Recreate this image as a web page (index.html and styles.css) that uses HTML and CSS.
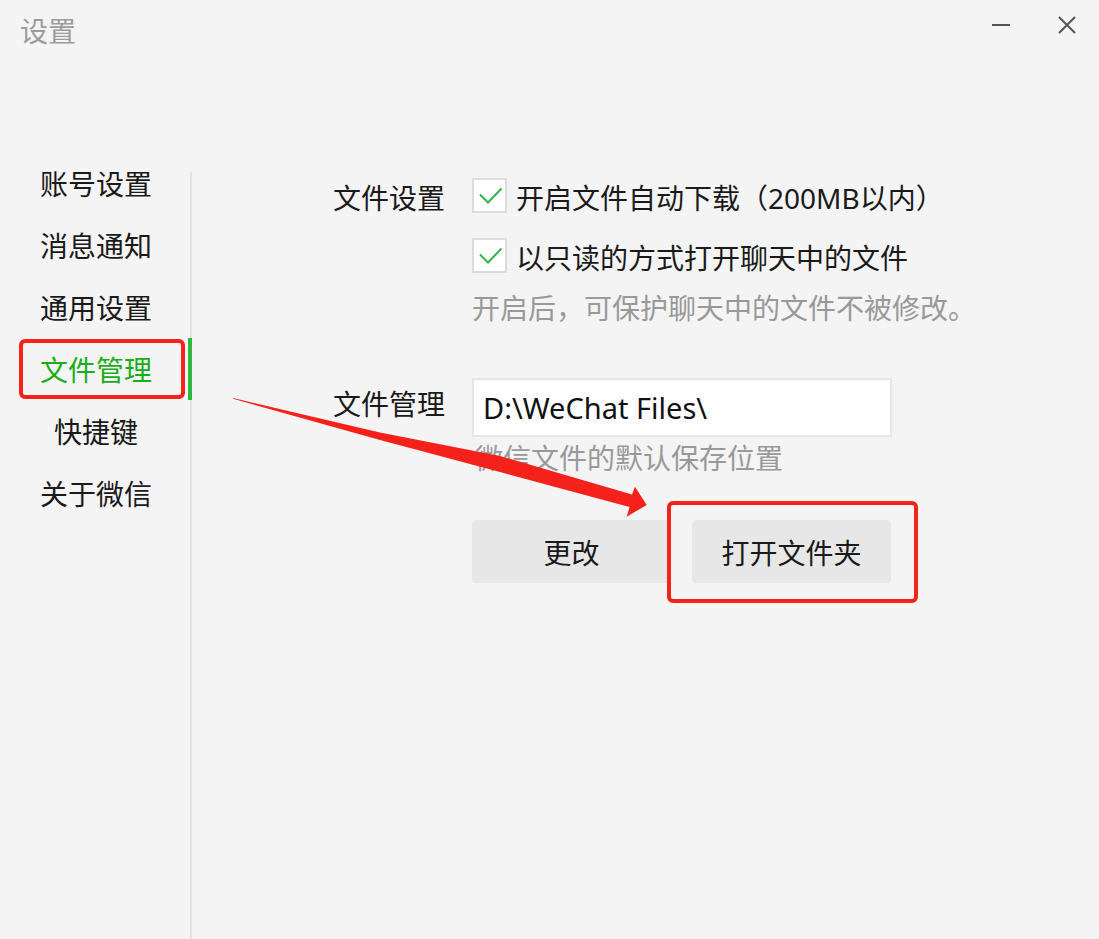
FILE: index.html
```html
<!DOCTYPE html>
<html lang="zh-CN">
<head>
<meta charset="utf-8">
<title>设置</title>
<link rel="stylesheet" href="styles.css">
</head>
<body>
<div class="window">
  <header class="titlebar">
    <span class="title">设置</span>
    <div class="controls">
      <svg class="ctrl" width="18" height="18" viewBox="0 0 18 18"><line x1="0" y1="9" x2="18" y2="9" stroke="#555" stroke-width="2"/></svg>
      <svg class="ctrl" width="18" height="18" viewBox="0 0 18 18"><path d="M1 1 L17 17 M17 1 L1 17" stroke="#555" stroke-width="2" fill="none"/></svg>
    </div>
  </header>
  <div class="main">
    <aside class="nav">
      <div class="nav-item">账号设置</div>
      <div class="nav-item">消息通知</div>
      <div class="nav-item">通用设置</div>
      <div class="nav-item active">文件管理<span class="annot annot-nav"></span></div>
      <div class="nav-item">快捷键</div>
      <div class="nav-item">关于微信</div>
    </aside>
    <main class="content">
      <section class="field">
        <div class="field-label field-label-top">文件设置</div>
        <div class="field-body">
          <div class="check-row">
            <span class="checkbox"><svg width="31" height="31" viewBox="0 0 31 31"><path d="M6 14.5 L14 22.5 L27.5 8.5" stroke="#35b24a" stroke-width="2" fill="none"/></svg></span>
            <span class="check-text">开启文件自动下载（200MB以内）</span>
          </div>
          <div class="check-row">
            <span class="checkbox"><svg width="31" height="31" viewBox="0 0 31 31"><path d="M6 14.5 L14 22.5 L27.5 8.5" stroke="#35b24a" stroke-width="2" fill="none"/></svg></span>
            <span class="check-text">以只读的方式打开聊天中的文件</span>
          </div>
          <div class="hint">开启后，可保护聊天中的文件不被修改。</div>
        </div>
      </section>
      <section class="field field-files">
        <div class="field-label">文件管理</div>
        <div class="field-body">
          <div class="path-input">D:\WeChat Files\</div>
          <div class="hint hint-tight">微信文件的默认保存位置</div>
          <div class="buttons">
            <button class="btn">更改</button>
            <button class="btn">打开文件夹<span class="annot annot-btn"></span></button>
          </div>
        </div>
      </section>
    </main>
  </div>
  <svg class="arrow" width="1099" height="939" viewBox="0 0 1099 939">
    <polygon points="233,398 380,432.5 500,456 632,494.5 635,486.7 646.7,505 626.7,516.7 629.5,507 500,472 380,440 233,398.8" fill="#f5221b"/>
  </svg>
</div>
</body>
</html>
```

FILE: styles.css
```css
* { box-sizing: border-box; }
html, body { margin: 0; padding: 0; }
body {
  background: #f4f4f4;
  font-family: "Noto Sans", "Noto Sans CJK SC", sans-serif;
  color: #1a1a1a;
}
.window {
  position: relative;
  width: 1099px;
  height: 939px;
  overflow: hidden;
  display: flex;
  flex-direction: column;
}
.titlebar {
  height: 70px;
  display: flex;
  justify-content: space-between;
  align-items: flex-start;
  flex-shrink: 0;
}
.title {
  margin: 13px 0 0 20px;
  font-size: 28px;
  line-height: 36px;
  color: #9c9c9c;
}
.controls {
  display: flex;
  gap: 48px;
  margin: 16px 23px 0 0;
}
.ctrl { display: block; }
.main {
  flex: 1;
  display: flex;
}
.nav {
  position: relative;
  width: 192px;
  flex-shrink: 0;
  padding-top: 83px;
  display: flex;
  flex-direction: column;
}
.nav::before {
  content: "";
  position: absolute;
  right: 0;
  top: 102px;
  bottom: 0;
  width: 2px;
  background: #e2e2e2;
}
.nav-item {
  position: relative;
  height: 62px;
  line-height: 62px;
  text-align: center;
  font-size: 28px;
}
.nav-item.active { color: #1aad19; }
.nav-item.active::after {
  content: "";
  position: absolute;
  right: 0;
  top: -1px;
  bottom: 1px;
  width: 4px;
  background: #2db83d;
  z-index: 1;
}
.annot {
  position: absolute;
  border: 4px solid #f5221b;
  border-radius: 6px;
  pointer-events: none;
}
.annot-nav {
  left: 19px;
  top: 0;
  width: 166px;
  height: 60px;
}
.content {
  flex: 1;
  padding: 108px 0 0 141px;
}
.field {
  display: flex;
  gap: 27px;
}
.field-label {
  width: 112px;
  flex-shrink: 0;
  font-size: 28px;
  line-height: 35px;
}
.field-label-top { padding-top: 3px; }
.field-body {
  display: flex;
  flex-direction: column;
  align-items: flex-start;
}
.check-row {
  display: flex;
  align-items: flex-start;
  gap: 9px;
  height: 35px;
  font-size: 28px;
  white-space: nowrap;
}
.check-text {
  line-height: 35px;
  margin-top: 3px;
}
.check-row + .check-row { margin-top: 25px; }
.checkbox {
  width: 35px;
  height: 35px;
  flex-shrink: 0;
  border: 2px solid #dcdcdc;
  background: #fff;
  display: flex;
}
.checkbox svg { display: block; }
.hint {
  font-size: 28px;
  line-height: 35px;
  color: #999;
  margin-top: 18px;
  white-space: nowrap;
}
.field-files { margin-top: 52px; }
.field-files .field-label { line-height: 52px; }
.path-input {
  width: 420px;
  height: 59px;
  border: 2px solid #e6e6e6;
  background: #fff;
  padding-left: 9px;
  font-size: 29px;
  display: flex;
  align-items: center;
  color: #111;
}
.hint-tight {
  margin-top: 4px;
  margin-left: 3px;
}
.buttons {
  display: flex;
  gap: 21px;
  margin-top: 44px;
}
.btn {
  position: relative;
  width: 199px;
  height: 63px;
  border: none;
  border-radius: 4px;
  background: #e7e7e7;
  font-family: inherit;
  font-size: 28px;
  color: #1a1a1a;
  padding: 0;
  display: flex;
  align-items: center;
  justify-content: center;
}
.annot-btn {
  left: -25px;
  top: -19px;
  width: 251px;
  height: 102px;
}
.arrow {
  position: absolute;
  left: 0;
  top: 0;
  pointer-events: none;
}
```
